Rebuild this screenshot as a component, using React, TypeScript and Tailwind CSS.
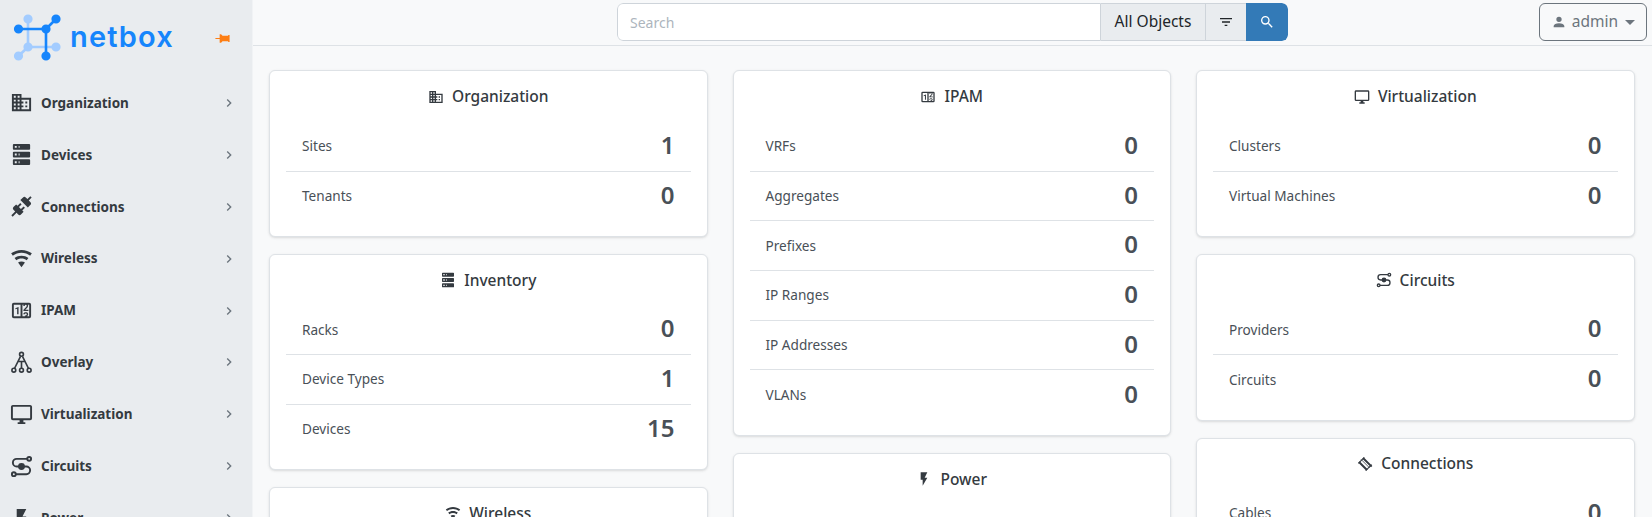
import React from "react";

const P: Record<string, string> = {
  domain: "M18,15H16V17H18M18,11H16V13H18M20,19H12V17H14V15H12V13H14V11H12V9H20M10,7H8V5H10M10,11H8V9H10M10,15H8V13H10M10,19H8V17H10M6,7H4V5H6M6,11H4V9H6M6,15H4V13H6M6,19H4V17H6M12,7V3H2V21H22V7H12Z",
  server: "M4,1H20A1,1 0 0,1 21,2V6A1,1 0 0,1 20,7H4A1,1 0 0,1 3,6V2A1,1 0 0,1 4,1M4,9H20A1,1 0 0,1 21,10V14A1,1 0 0,1 20,15H4A1,1 0 0,1 3,14V10A1,1 0 0,1 4,9M4,17H20A1,1 0 0,1 21,18V22A1,1 0 0,1 20,23H4A1,1 0 0,1 3,22V18A1,1 0 0,1 4,17M9,5H10V3H9V5M9,13H10V11H9V13M9,21H10V19H9V21M5,3V5H7V3H5M5,11V13H7V11H5M5,19V21H7V19H5Z",
  connection: "M21.4 7.5C22.2 8.3 22.2 9.6 21.4 10.3L18.6 13.1L10.8 5.3L13.6 2.5C14.4 1.7 15.7 1.7 16.4 2.5L18.2 4.3L21.2 1.3L22.6 2.7L19.6 5.7L21.4 7.5M15.6 13.3L14.2 11.9L11.4 14.7L9.3 12.6L12.1 9.8L10.7 8.4L7.9 11.2L6.4 9.8L3.6 12.6C2.8 13.4 2.8 14.7 3.6 15.4L5.4 17.2L1.4 21.2L2.8 22.6L6.8 18.6L8.6 20.4C9.4 21.2 10.7 21.2 11.4 20.4L14.2 17.6L12.8 16.2L15.6 13.3Z",
  wifi: "M12,21L15.6,16.2C14.6,15.45 13.35,15 12,15C10.65,15 9.4,15.45 8.4,16.2L12,21M12,3C7.95,3 4.21,4.34 1.2,6.6L3,9C5.5,7.12 8.62,6 12,6C15.38,6 18.5,7.12 21,9L22.8,6.6C19.79,4.34 16.05,3 12,3M12,9C9.3,9 6.81,9.89 4.8,11.4L6.6,13.8C8.1,12.67 9.97,12 12,12C14.03,12 15.9,12.67 17.4,13.8L19.2,11.4C17.19,9.89 14.7,9 12,9Z",
  counter: "M4,4H20A2,2 0 0,1 22,6V18A2,2 0 0,1 20,20H4A2,2 0 0,1 2,18V6A2,2 0 0,1 4,4M4,6V18H11V6H4M20,18V6H18.76C19,6.54 18.95,7.07 18.95,7.13C18.88,7.8 18.41,8.5 18.24,8.75L15.91,11.3L19.23,11.28L19.24,12.5L14.04,12.47L14,11.47C14,11.47 17.05,8.24 17.2,7.95C17.34,7.67 17.91,6 16.5,6C15.27,6.05 15.41,7.3 15.41,7.3L13.87,7.31C13.87,7.31 13.88,6.65 14.25,6H13V18H15.58L15.57,17.14L16.54,17.13C16.54,17.13 17.45,16.97 17.46,16.08C17.5,15.08 16.65,15.08 16.5,15.08C16.37,15.08 15.43,15.13 15.43,15.95H13.91C13.91,15.95 13.95,13.89 16.5,13.89C19.1,13.89 18.96,15.91 18.96,15.91C18.96,15.91 19,17.16 17.85,17.63L18.37,18H20M8.92,16H7.42V10.2L5.62,10.76V9.53L8.76,8.41H8.92V16Z",
  monitor: "M21,16H3V4H21M21,2H3C1.89,2 1,2.89 1,4V16A2,2 0 0,0 3,18H10V20H8V22H16V20H14V18H21A2,2 0 0,0 23,16V4C23,2.89 22.1,2 21,2Z",
  flash: "M7,2V13H10V22L17,10H13L17,2H7Z",
  magnify: "M9.5,3A6.5,6.5 0 0,1 16,9.5C16,11.11 15.41,12.59 14.44,13.73L14.71,14H15.5L20.5,19L19,20.5L14,15.5V14.71L13.73,14.44C12.59,15.41 11.11,16 9.5,16A6.5,6.5 0 0,1 3,9.5A6.5,6.5 0 0,1 9.5,3M9.5,5C7,5 5,7 5,9.5C5,12 7,14 9.5,14C12,14 14,12 14,9.5C14,7 12,5 9.5,5Z",
  filter: "M6,13H18V11H6M3,6V8H21V6M10,18H14V16H10V18Z",
  account: "M12,4A4,4 0 0,1 16,8A4,4 0 0,1 12,12A4,4 0 0,1 8,8A4,4 0 0,1 12,4M12,14C16.42,14 20,15.79 20,18V20H4V18C4,15.79 7.58,14 12,14Z",
  chevron: "M8.59,16.58L13.17,12L8.59,7.41L10,6L16,12L10,18L8.59,16.58Z",
};

function Mdi({ name, className }: { name: string; className: string }) {
  if (name === "overlay") {
    return (
      <svg viewBox="0 0 24 24" className={className} fill="none" stroke="currentColor" strokeWidth="1.7">
        <circle cx="12" cy="3.5" r="2" />
        <circle cx="4" cy="20" r="2" />
        <circle cx="12" cy="20" r="2" />
        <circle cx="20" cy="20" r="2" />
        <path d="M11 5.5 L4.8 18 M13 5.5 L19.2 18 M12 11 V18 M8.5 11 H15.5" />
      </svg>
    );
  }
  if (name === "circuits") {
    return (
      <svg viewBox="0 0 24 24" className={className} fill="none" stroke="currentColor" strokeWidth="2">
        <circle cx="20" cy="4" r="2" />
        <circle cx="4" cy="20" r="2" />
        <circle cx="12" cy="12" r="2.6" fill="currentColor" />
        <path d="M18 4H7a4 4 0 0 0 0 8h10a4 4 0 0 1 0 8H6" />
      </svg>
    );
  }
  if (name === "cable") {
    return (
      <svg viewBox="0 0 24 24" className={className} fill="none" stroke="currentColor">
        <path d="M9 3 L22 16 M3 9 L15 21" strokeWidth="3" />
        <path d="M6 5 L19 18" strokeWidth="1.2" />
        <path d="M2 11 L11 2 M13 22 L22 13" strokeWidth="1.6" />
      </svg>
    );
  }
  return (
    <svg viewBox="0 0 24 24" className={className} fill="currentColor">
      <path d={P[name]} />
    </svg>
  );
}

function Logo() {
  return (
    <div className="relative h-[70px] w-[200px] shrink-0">
      <svg viewBox="0 0 70 70" className="absolute left-0 top-0 h-[70px] w-[70px]">
        <g stroke="#a3ccff" strokeWidth="2.6" fill="#a3ccff">
          <path d="M28 19V47H56M28 47L18.5 56" fill="none" />
          <circle cx="28" cy="19" r="3.3" />
          <circle cx="28" cy="47" r="3.3" />
          <circle cx="56" cy="47" r="3.3" />
          <circle cx="18.5" cy="56" r="3.3" />
        </g>
        <g stroke="#1685fc" strokeWidth="2.6" fill="#1685fc">
          <path d="M18.5 29H46V56M46 29L56 19" fill="none" />
          <circle cx="18.5" cy="29" r="3.3" />
          <circle cx="46" cy="29" r="3.3" />
          <circle cx="56" cy="19" r="3.3" />
          <circle cx="46" cy="56" r="3.3" />
        </g>
      </svg>
      <span className="absolute left-[70px] top-[18px] font-['Inter',sans-serif] text-[29px] font-semibold leading-[38px] tracking-[1.2px] text-[#1685fc]">
        netbox
      </span>
    </div>
  );
}

const nav = [
  ["domain", "Organization"],
  ["server", "Devices"],
  ["connection", "Connections"],
  ["wifi", "Wireless"],
  ["counter", "IPAM"],
  ["overlay", "Overlay"],
  ["monitor", "Virtualization"],
  ["circuits", "Circuits"],
  ["flash", "Power"],
];

function Sidebar() {
  return (
    <aside className="flex h-[517px] w-[253px] shrink-0 flex-col overflow-hidden border-r border-[#f1f3f5] bg-[#e9ecef]">
      <div className="relative flex h-[77px] shrink-0 items-start">
        <Logo />
        <svg viewBox="0 0 24 24" className="absolute left-[214px] top-[30px] h-[17px] w-[17px] rotate-90" fill="#fd7e14">
          <path d="M16,12V4H17V2H7V4H8V12L6,14V16H11.2V22H12.8V16H18V14L16,12Z" />
        </svg>
      </div>
      <nav className="flex flex-col">
        {nav.map(([icon, label]) => (
          <div key={label} className="flex h-[51.9px] shrink-0 items-center pl-[10px] pr-[15px] text-[#343a40]">
            <Mdi name={icon} className="h-[23px] w-[23px] shrink-0" />
            <span className="ml-[8px] flex-1 text-[13.5px] font-bold">{label}</span>
            <Mdi name="chevron" className="h-[16px] w-[16px] text-[#6c757d]" />
          </div>
        ))}
      </nav>
    </aside>
  );
}

function Header() {
  return (
    <header className="flex h-[46px] shrink-0 items-start justify-between border-b border-[#dee2e6] bg-[#f8f9fa] pl-[364px] pr-[5px] pt-[3px]">
      <div className="flex h-[38px] w-[671px] overflow-hidden rounded-md">
        <div className="flex flex-1 items-center rounded-l-md border border-[#ced4da] bg-white pl-[12px] text-[14px] text-[#adb5bd]">
          Search
        </div>
        <div className="flex w-[104px] items-center justify-center whitespace-nowrap border-y border-[#ced4da] bg-[#e9ecef] text-[15.5px] text-[#212529]">
          All Objects
        </div>
        <div className="flex w-[41px] items-center justify-center border-y border-l border-[#ced4da] bg-[#e9ecef] text-[#212529]">
          <Mdi name="filter" className="h-[16px] w-[16px]" />
        </div>
        <div className="flex w-[42px] items-center justify-center rounded-r-md bg-[#337ab7] text-white">
          <Mdi name="magnify" className="h-[16px] w-[16px]" />
        </div>
      </div>
      <div className="flex h-[38px] w-[108px] items-center justify-center rounded-md border border-[#6c757d] text-[15.5px] text-[#6c757d]">
        <Mdi name="account" className="h-[16px] w-[16px]" />
        <span className="ml-[5px]">admin</span>
        <span className="ml-[7px] h-0 w-0 border-x-[5px] border-t-[5px] border-x-transparent border-t-[#6c757d]" />
      </div>
    </header>
  );
}

function Card({ icon, title, rows }: { icon: string; title: string; rows: [string, string][] }) {
  return (
    <section className="shrink-0 rounded-md border border-[#dee2e6] bg-white px-[16px] pb-[15px] pt-[12px] shadow-sm first:pt-[13px]">
      <h2 className="flex h-[26px] items-center justify-center text-[15.5px] font-medium text-[#343a40]">
        <Mdi name={icon} className="mr-[8px] h-[16px] w-[16px]" />
        {title}
      </h2>
      <div className="mt-[12px] flex flex-col divide-y divide-[#dee2e6]">
        {rows.map(([k, v]) => (
          <div key={k} className="flex h-[49.7px] items-center justify-between px-[16px] text-[#495057]">
            <span className="text-[13.6px]">{k}</span>
            <span className="-mt-[3px] text-[24px] font-semibold leading-[28px]">{v}</span>
          </div>
        ))}
      </div>
    </section>
  );
}

export default function App() {
  return (
    <div className="flex h-[517px] w-[1652px] overflow-hidden bg-[#f8f9fa] font-['Noto_Sans',sans-serif]">
      <Sidebar />
      <main className="flex min-w-0 flex-1 flex-col overflow-hidden">
        <Header />
        <div className="grid grid-cols-3 gap-x-[25px] pl-[16px] pr-[17.5px] pt-[24px]">
          <div className="flex flex-col gap-[17px]">
            <Card icon="domain" title="Organization" rows={[["Sites", "1"], ["Tenants", "0"]]} />
            <Card icon="server" title="Inventory" rows={[["Racks", "0"], ["Device Types", "1"], ["Devices", "15"]]} />
            <Card icon="wifi" title="Wireless" rows={[["Wireless LANs", "0"]]} />
          </div>
          <div className="flex flex-col gap-[17px]">
            <Card icon="counter" title="IPAM" rows={[["VRFs", "0"], ["Aggregates", "0"], ["Prefixes", "0"], ["IP Ranges", "0"], ["IP Addresses", "0"], ["VLANs", "0"]]} />
            <Card icon="flash" title="Power" rows={[["Power Panels", "0"]]} />
          </div>
          <div className="flex flex-col gap-[17px]">
            <Card icon="monitor" title="Virtualization" rows={[["Clusters", "0"], ["Virtual Machines", "0"]]} />
            <Card icon="circuits" title="Circuits" rows={[["Providers", "0"], ["Circuits", "0"]]} />
            <Card icon="cable" title="Connections" rows={[["Cables", "0"]]} />
          </div>
        </div>
      </main>
    </div>
  );
}
